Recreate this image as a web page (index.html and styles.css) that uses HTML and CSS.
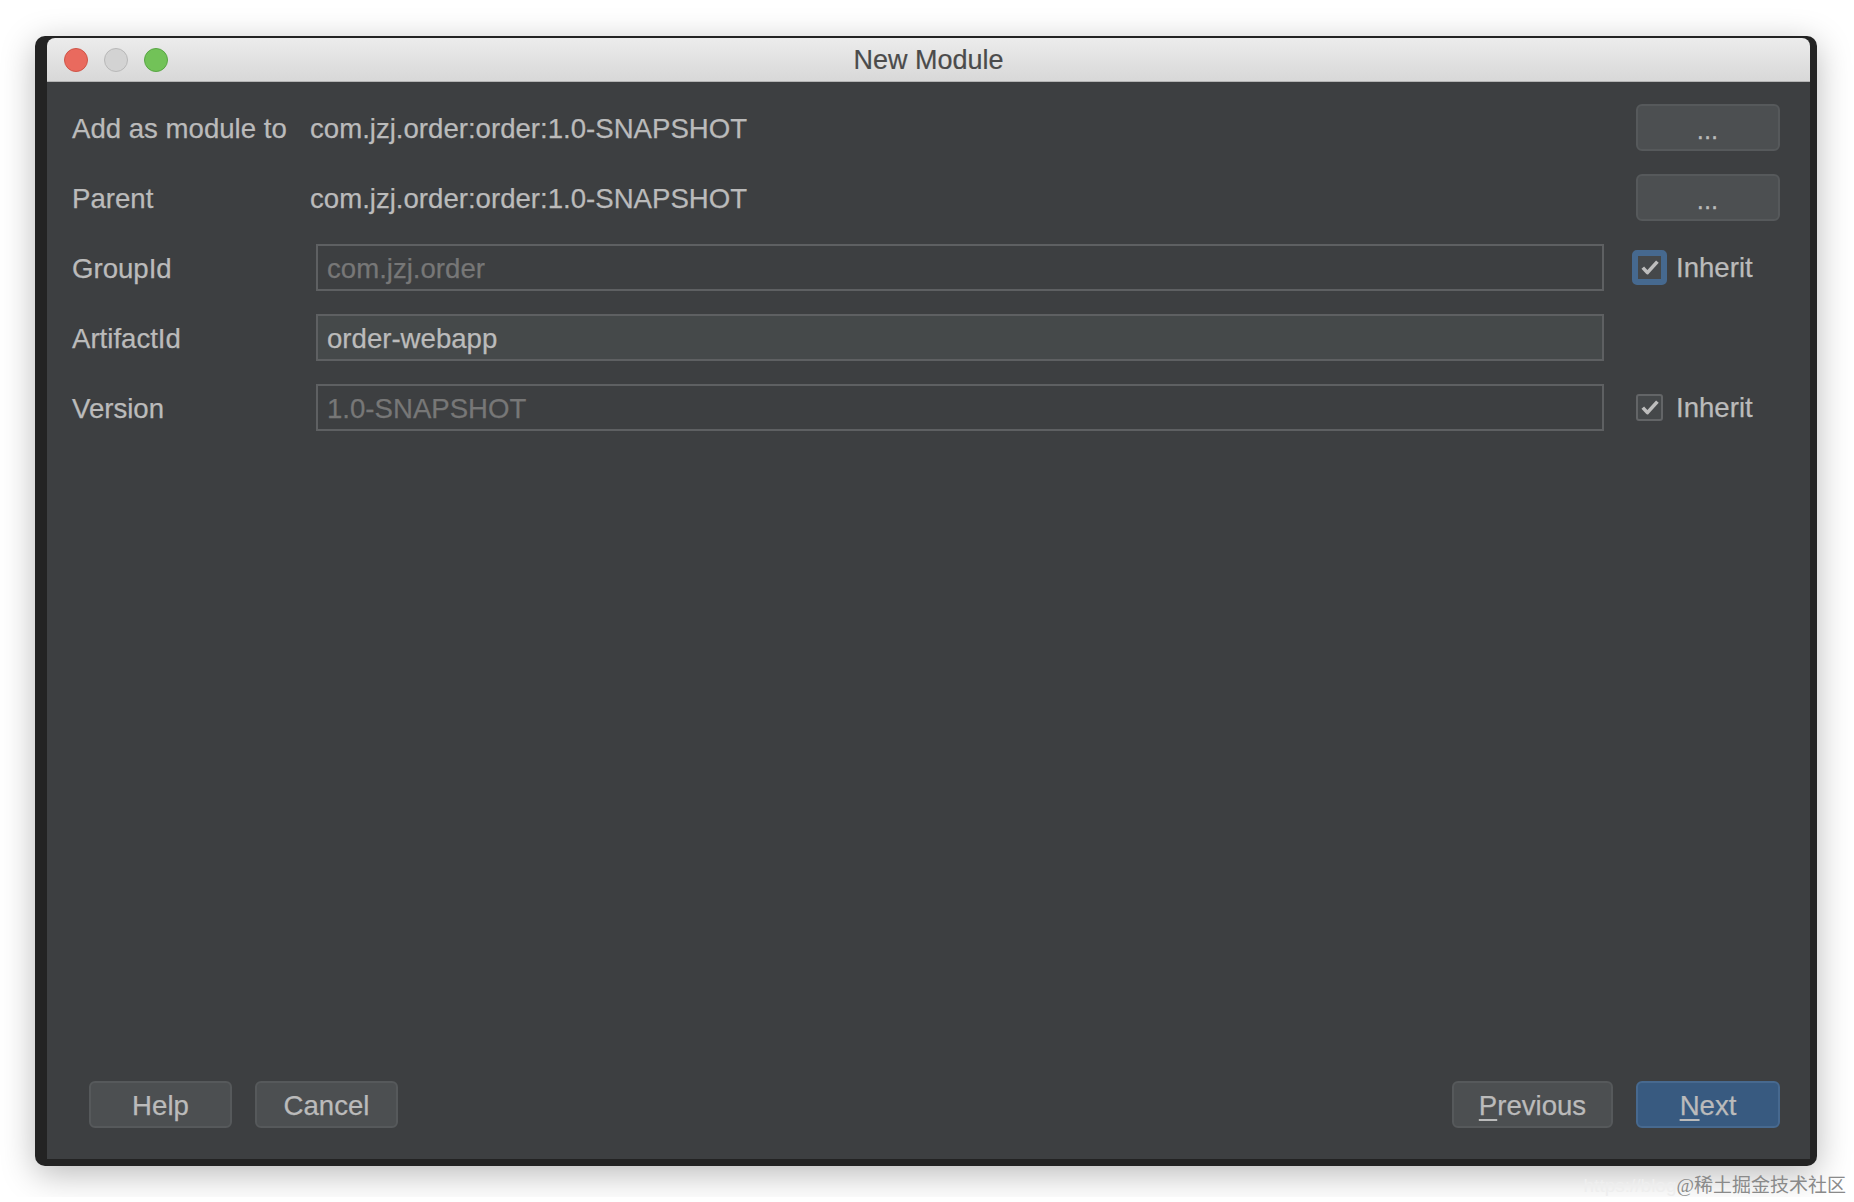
FILE: index.html
```html
<!DOCTYPE html>
<html>
<head>
	<title>New Module</title>
	<link rel="stylesheet" href="styles.css">
</head>
<body>
	<div class="window">
		<div class="titlebar">
			<div class="lights">
				<span class="light red"></span>
				<span class="light gray"></span>
				<span class="light green"></span>
			</div>
			<div class="title">New Module</div>
			<div></div>
		</div>
		<div class="content">
			<div class="form">
				<div class="label">Add as module to</div>
				<div class="value">com.jzj.order:order:1.0-SNAPSHOT</div>
				<div class="btn dots">...</div>

				<div class="label">Parent</div>
				<div class="value">com.jzj.order:order:1.0-SNAPSHOT</div>
				<div class="btn dots">...</div>

				<div class="label">GroupId</div>
				<div class="field disabled">com.jzj.order</div>
				<div class="check focused">
					<span class="box"><svg viewBox="0 0 18 15"><path d="M1.8 7.6 L6.4 12.6 L16.4 1.6"/></svg></span>
					<span>Inherit</span>
				</div>

				<div class="label">ArtifactId</div>
				<div class="field">order-webapp</div>
				<div></div>

				<div class="label">Version</div>
				<div class="field disabled">1.0-SNAPSHOT</div>
				<div class="check">
					<span class="box"><svg viewBox="0 0 18 15"><path d="M1.8 7.6 L6.4 12.6 L16.4 1.6"/></svg></span>
					<span>Inherit</span>
				</div>
			</div>
			<div class="footer">
				<div class="group">
					<div class="btn">Help</div>
					<div class="btn">Cancel</div>
				</div>
				<div class="group">
					<div class="btn wide"><u>P</u>revious</div>
					<div class="btn primary"><u>N</u>ext</div>
				</div>
			</div>
		</div>
	</div>
	<div class="watermark"><span class="faint">https://blog</span>@稀土掘金技术社区</div>
</body>
</html>
```

FILE: styles.css
```css
body {
	margin: 0;
	padding: 36px 0 0 35px;
	background: #ffffff;
	font-family: "Liberation Sans", Arial, sans-serif;
	font-size: 27.6px;
	overflow: hidden;
}
.window {
	width: 1782px;
	background-color: #232323;
	border-radius: 10px;
	padding: 2px 7px 7px 12px;
	height: 1130px;
	box-sizing: border-box;
	display: flex;
	flex-direction: column;
	box-shadow: 0 8px 34px rgba(0, 0, 0, 0.28);
}
.titlebar {
	height: 44px;
	box-sizing: border-box;
	display: grid;
	grid-template-columns: 1fr auto 1fr;
	align-items: center;
	background-image: linear-gradient(to bottom, #ececec, #d8d8d8);
	border-bottom: 1px solid #b4b4b4;
	border-radius: 8px 8px 0 0;
	padding: 1px 17px 0 17px;
}
.lights {
	display: flex;
	gap: 16px;
}
.light {
	width: 22px;
	height: 22px;
	border-radius: 50%;
	border: 1px solid;
}
.red {
	background-color: #e96a5e;
	border-color: #cf5548;
}
.gray {
	background-color: #d3d3d3;
	border-color: #b8b8b8;
}
.green {
	background-color: #72c258;
	border-color: #58a644;
}
.title {
	color: #4b4b4b;
	font-size: 27px;
	-webkit-text-stroke: 0.2px #4b4b4b;
}
.content {
	flex: 1;
	background-color: #3d3f41;
	color: #bbbbbb;
	-webkit-text-stroke: 0.25px;
	display: flex;
	flex-direction: column;
	justify-content: space-between;
	padding: 22px 30px 31px 25px;
}
.form {
	display: grid;
	grid-template-columns: 238px 1fr 144px;
	grid-auto-rows: 47px;
	column-gap: 32px;
	row-gap: 23px;
	align-items: center;
}
.form .label {
	margin-right: -32px;
	padding-top: 2px;
}
.value {
	margin-left: -32px;
	padding-top: 2px;
}
.field {
	height: 47px;
	box-sizing: border-box;
	border: 2px solid #5e6062;
	background-color: #45494a;
	color: #bbbbbb;
	padding: 2px 9px 0 9px;
	margin-left: -26px;
	display: flex;
	align-items: center;
}
.field.disabled {
	background-color: #3d3f41;
	color: #777777;
}
.btn {
	height: 47px;
	box-sizing: border-box;
	width: 144px;
	border: 2px solid #56595b;
	border-radius: 6px;
	background-color: #4c4f51;
	color: #bbbbbb;
	display: flex;
	align-items: center;
	justify-content: center;
	padding-top: 2px;
	user-select: none;
}
.btn.dots {
	font-size: 22px;
	padding-top: 8px;
	letter-spacing: 1px;
	-webkit-text-stroke: 0.6px;
}
.btn.primary {
	background-color: #385a80;
	border-color: #47698f;
}
.btn u {
	text-underline-offset: 4px;
	text-decoration-thickness: 2px;
}
.check {
	display: flex;
	align-items: center;
	gap: 13px;
}
.box {
	width: 27px;
	height: 27px;
	box-sizing: border-box;
	border: 2px solid #636567;
	border-radius: 3px;
	background-color: #45484a;
	display: flex;
	align-items: center;
	justify-content: center;
}
.box svg {
	width: 18px;
	height: 15px;
	fill: none;
	stroke: #bdbdbd;
	stroke-width: 3.6;
	stroke-linejoin: round;
}
.check.focused .box {
	width: 35px;
	height: 35px;
	border: 6px solid #46698f;
	border-radius: 5px;
	margin: 0 -4px;
}
.footer {
	display: flex;
	justify-content: space-between;
	padding-left: 17px;
}
.group {
	display: flex;
	gap: 23px;
}
.group .btn {
	width: 143px;
}
.group .btn.wide {
	width: 161px;
}
.group .btn.primary {
	width: 144px;
}
.watermark {
	text-align: right;
	white-space: nowrap;
	padding-right: 8px;
	margin-top: 4px;
	font-family: "Liberation Serif", "Noto Sans CJK SC", serif;
	font-size: 19px;
	color: #8a8a8a;
}
.watermark .faint {
	font-family: "Liberation Sans", sans-serif;
	color: #eeeeee;
}
```
